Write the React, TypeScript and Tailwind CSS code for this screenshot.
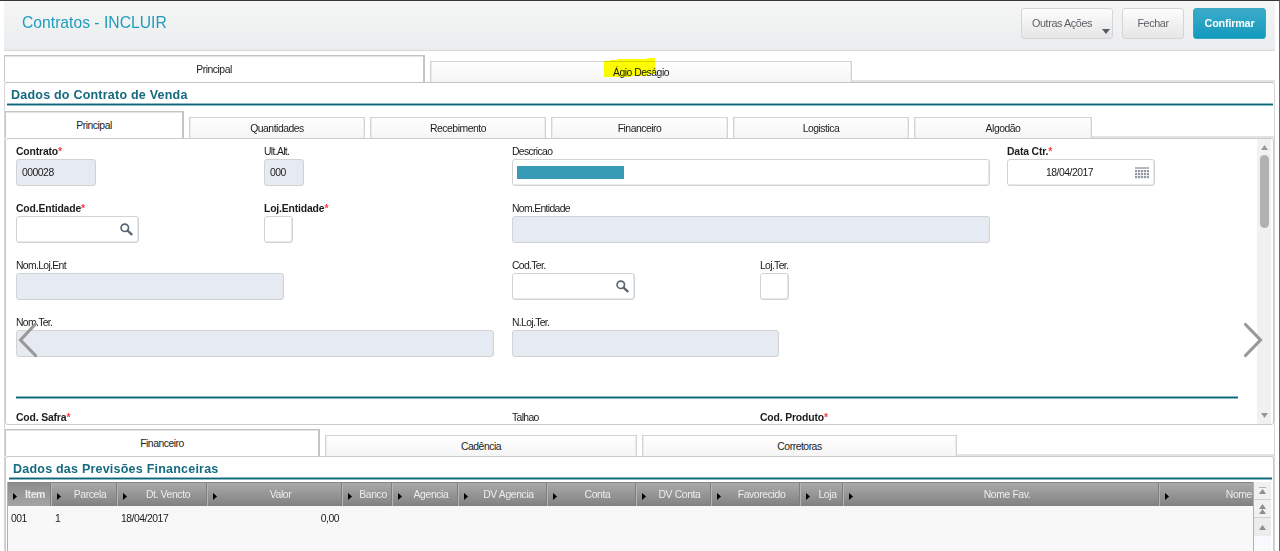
import type { ReactNode } from 'react'
import clsx from 'clsx'

interface TabItem {
  label: string
  width: string
}

const mainTabs: TabItem[] = [
  { label: 'Principal', width: 'w-[421px]' },
  { label: 'Ágio Deságio', width: 'w-[422px]' },
]

const contractTabs: TabItem[] = [
  { label: 'Principal', width: 'w-[179px]' },
  { label: 'Quantidades', width: 'w-[176px]' },
  { label: 'Recebimento', width: 'w-[176px]' },
  { label: 'Financeiro', width: 'w-[177px]' },
  { label: 'Logistica', width: 'w-[176px]' },
  { label: 'Algodão', width: 'w-[178px]' },
]

const forecastTabs: TabItem[] = [
  { label: 'Financeiro', width: 'w-[315px]' },
  { label: 'Cadência', width: 'w-[312px]' },
  { label: 'Corretoras', width: 'w-[315px]' },
]

const columns: TabItem[] = [
  { label: 'Item', width: 'w-[44px]' },
  { label: 'Parcela', width: 'w-[66px]' },
  { label: 'Dt. Vencto', width: 'w-[90px]' },
  { label: 'Valor', width: 'w-[135px]' },
  { label: 'Banco', width: 'w-[50px]' },
  { label: 'Agencia', width: 'w-[66px]' },
  { label: 'DV Agencia', width: 'w-[89px]' },
  { label: 'Conta', width: 'w-[89px]' },
  { label: 'DV Conta', width: 'w-[75px]' },
  { label: 'Favorecido', width: 'w-[89px]' },
  { label: 'Loja', width: 'w-[43px]' },
  { label: 'Nome Fav.', width: 'w-[316px]' },
]

function Tabs({ items, marked }: { items: TabItem[]; marked?: string }) {
  return (
    <div className="flex h-[27px] items-end gap-[5px]">
      {items.map((tab, i) => (
        <div
          key={tab.label}
          className={clsx(
            'relative flex shrink-0 items-center justify-center border-t border-l',
            tab.width,
            i === 0
              ? 'h-[27px] border-r-2 border-[#c4c4c4] bg-white pt-0.5 shadow-[inset_0_1px_0_#e4e4e4]'
              : 'h-[21px] border-r border-[#d3d3d3] bg-linear-to-b from-white to-[#f5f5f5] pt-px shadow-[inset_1px_0_0_#ececec,inset_-1px_0_0_#ececec]',
          )}
        >
          <span className="text-[10.4px] leading-3 tracking-[-0.48px] whitespace-nowrap">{tab.label}</span>
          {marked === tab.label && (
            <svg className="absolute -top-[4px] left-[173px] mix-blend-multiply" width="53" height="20" viewBox="0 0 53 20">
              <path d="M0 3h6V2h7V1h30V0h8v16h-7v2H27v1H0z" fill="#ffff00" />
            </svg>
          )}
        </div>
      ))}
      <div className="-ml-[5px] h-0.5 flex-1 bg-[#e3e3e3]" />
    </div>
  )
}

function Rule({ className }: { className?: string }) {
  return <div className={clsx('h-[3px] shrink-0 border-y border-[#8dbac5] bg-[#0e667b]', className)} />
}

function SectionTitle({ children }: { children: ReactNode }) {
  return <h2 className="text-[12.5px] leading-4 font-bold tracking-[0.22px] text-[#156a80]">{children}</h2>
}

interface FieldProps {
  label: string
  required?: boolean
  disabled?: boolean
  width?: string
  span?: string
  children?: ReactNode
}

function Field({ label, required, disabled, width, span, children }: FieldProps) {
  return (
    <div className={span}>
      <div
        className={clsx(
          'h-[14px] text-[10.4px] leading-[13px] whitespace-nowrap',
          required ? 'font-bold tracking-[-0.16px]' : 'tracking-[-0.66px]',
        )}
      >
        {label}
        {required && <span className="text-[#ff3b3b]">*</span>}
      </div>
      {width && (
        <div
          className={clsx(
            'flex h-[27px] items-center rounded-[3px] border border-[#d0d3d5] pl-[5px] text-[10.4px] tracking-[-0.5px] shadow-[inset_-1px_-1px_0_#e6e8e9]',
            width,
            disabled ? 'bg-[#e6eaf2]' : 'bg-white',
          )}
        >
          {children}
        </div>
      )}
    </div>
  )
}

function SearchIcon() {
  return (
    <svg className="mr-[5px] ml-auto" width="13" height="13" viewBox="0 0 13 13" fill="none" stroke="#5b6673">
      <circle cx="4.8" cy="4.8" r="3.7" strokeWidth="1.7" />
      <path d="M7.6 7.600l4 3.700" strokeWidth="2.3" strokeLinecap="round" />
    </svg>
  )
}

function CalendarIcon() {
  return (
    <svg className="mr-[5px] ml-auto" width="14" height="12" viewBox="0 0 14 12" fill="#9298a3">
      <path d="M0 0h14v2H0z" fill="#b3b8c0" />
      {[3, 6, 9].map((y) =>
        [0, 3, 6, 9, 12].map((x) => <rect key={`${x}-${y}`} x={x} y={y} width="2.2" height="2.2" />),
      )}
    </svg>
  )
}

function Triangle({ down, className }: { down?: boolean; className?: string }) {
  return (
    <svg className={className} width="7" height="5" viewBox="0 0 7 5" fill="currentColor">
      <path d={down ? 'M0 0h7L3.5 5z' : 'M0 5h7L3.5 0z'} />
    </svg>
  )
}

function ColumnArrow() {
  return (
    <svg className="mt-[3px] shrink-0" width="4" height="7" viewBox="0 0 4 7">
      <path d="M0 0v7l4-3.5z" fill="#000" />
    </svg>
  )
}

function ContractForm() {
  return (
    <div className="flex h-[287px] shrink-0 overflow-hidden rounded-[3px] border border-[#cbcbcb]">
      <div className="flex-1 pt-1.5 pl-2.5">
        <div className="grid auto-rows-[57px] grid-cols-[248px_248px_248px_247px_1fr]">
          <Field label="Contrato" required disabled width="w-[80px]">000028</Field>
          <Field label="Ult.Alt." disabled width="w-[40px]">000</Field>
          <Field label="Descricao" width="w-[478px]" span="col-span-2">
            <div className="-ml-px h-[13px] w-[107px] bg-[#379bb5]" />
          </Field>
          <Field label="Data Ctr." required width="w-[148px]">
            <span className="pl-[33px]">18/04/2017</span>
            <CalendarIcon />
          </Field>

          <Field label="Cod.Entidade" required width="w-[123px]">
            <SearchIcon />
          </Field>
          <Field label="Loj.Entidade" required width="w-[29px]" />
          <Field label="Nom.Entidade" disabled width="w-[478px]" span="col-span-3" />

          <Field label="Nom.Loj.Ent" disabled width="w-[268px]" span="col-span-2" />
          <Field label="Cod.Ter." width="w-[123px]">
            <SearchIcon />
          </Field>
          <Field label="Loj.Ter." width="w-[29px]" span="col-span-2" />

          <Field label="Nom.Ter." disabled width="w-[478px]" span="col-span-2" />
          <Field label="N.Loj.Ter." disabled width="w-[267px]" span="col-span-3" />
        </div>
        <Rule className="mt-[23px] w-[1222px]" />
        <div className="grid grid-cols-[496px_248px_1fr] pt-3">
          <Field label="Cod. Safra" required />
          <Field label="Talhao" />
          <Field label="Cod. Produto" required />
        </div>
      </div>
      <div className="mr-0.5 flex w-[14px] flex-col items-center bg-[#f1f1f1] py-1.5 text-[#9a9a9a]">
        <Triangle />
        <div className="mt-[5px] h-[73px] w-[9px] rounded-full bg-[#b1b1b1]" />
        <Triangle down className="mt-auto" />
      </div>
    </div>
  )
}

function ForecastGrid() {
  return (
    <div className="mr-0.5 ml-px flex flex-1">
      <div className="flex flex-1 flex-col overflow-hidden border-r border-l border-[#b0b0b0] bg-[#f8f8f8]">
        <div className="flex h-[24px] shrink-0 overflow-hidden border-t border-[#868686] bg-linear-to-b from-[#aaaaaa] to-[#818181] text-[10.4px] tracking-[-0.38px] text-[#ececec]">
          {columns.map((col, i) => (
            <div
              key={col.label}
              className={clsx(
                'flex shrink-0 items-center border-r border-[#b5b5b5] pl-[5px] shadow-[inset_-1px_0_0_#7d7d7d]',
                col.width,
                i === 0 && 'bg-linear-to-b from-[#8d8d8d] to-[#a5a5a5] font-bold',
              )}
            >
              <ColumnArrow />
              <span className="flex-1 pl-0.5 text-center whitespace-nowrap">{col.label}</span>
            </div>
          ))}
          <div className="flex w-[94px] shrink-0 items-center pl-[5px]">
            <ColumnArrow />
            <span className="ml-auto pr-0.5">Nome</span>
          </div>
        </div>
        <div className="flex pt-[7px] text-[10.4px] leading-3 tracking-[-0.48px]">
          <span className="w-[44px] pl-[3px]">001</span>
          <span className="w-[66px] pl-[3px]">1</span>
          <span className="w-[90px] pl-[3px]">18/04/2017</span>
          <span className="w-[135px] pr-1 text-right">0,00</span>
        </div>
      </div>
      <div className="flex w-[17px] flex-col bg-[#f8f9fc] text-[#8f8f8f]">
        <button type="button" aria-label="Primeiro" className="flex h-[18px] flex-col items-center justify-center gap-px border-b border-[#cfcfcf] bg-[#f0f1f2]">
          <span className="h-px w-[7px] bg-[#b5b5b5]" />
          <Triangle />
        </button>
        <button type="button" aria-label="Página anterior" className="flex h-[18px] flex-col items-center justify-center border-b border-[#cfcfcf] bg-[#f0f1f2]">
          <Triangle />
          <Triangle />
        </button>
        <button type="button" aria-label="Anterior" className="flex h-[18px] flex-col items-center justify-center bg-[#ececee]">
          <Triangle />
        </button>
      </div>
    </div>
  )
}

export default function App() {
  return (
    <div className="relative flex h-[551px] w-[1280px] flex-col overflow-hidden border-t border-r border-t-[#38383a] border-r-[#2a7f95] bg-white pr-1 pl-1 font-['Liberation_Sans',Arial,sans-serif] text-[#1c1c1c]">
      <header className="flex h-[50px] shrink-0 items-start border-b border-[#d8d9da] bg-linear-to-b from-[#f5f6f5] to-[#ebecee] pr-[9px] pl-[18px]">
        <h1 className="pt-[11px] text-[15.7px] leading-[22px] text-[#1d9dbd]">Contratos - INCLUIR</h1>
        <div className="ml-auto flex gap-[9px] pt-[7px] text-[10.8px] tracking-[-0.4px] text-[#5c5f66]">
          <button
            type="button"
            className="relative h-[31px] w-[92px] rounded-[3px] border border-[#d4d5d6] bg-linear-to-b from-[#fdfdfd] to-[#e6e6e6] pr-2.5 whitespace-nowrap"
          >
            Outras Ações
            <svg className="absolute right-0.5 bottom-1" width="8" height="5" viewBox="0 0 8 5">
              <path d="M0 0h8L4 5z" fill="#555962" />
            </svg>
          </button>
          <button type="button" className="h-[31px] w-[62px] rounded-[3px] border border-[#d4d5d6] bg-linear-to-b from-[#fdfdfd] to-[#e6e6e6]">
            Fechar
          </button>
          <button type="button" className="h-[31px] w-[73px] rounded-[3px] border border-[#3fa6c1] bg-linear-to-b from-[#3aabc9] to-[#0e9abd] font-bold tracking-[-0.2px] text-white">
            Confirmar
          </button>
        </div>
      </header>

      <div className="shrink-0 pt-1">
        <Tabs items={mainTabs} marked="Ágio Deságio" />
      </div>

      <main className="flex min-h-0 flex-1 flex-col rounded-t-[3px] border-x border-t border-x-[#d6d6d6] border-t-[#c4c4c4]">
        <div className="px-1.5 pt-1">
          <SectionTitle>Dados do Contrato de Venda</SectionTitle>
        </div>
        <Rule className="mr-px ml-0.5" />
        <div className="shrink-0 pt-[5px]">
          <Tabs items={contractTabs} />
        </div>
        <ContractForm />
        <div className="shrink-0 pt-1">
          <Tabs items={forecastTabs} />
        </div>
        <section className="flex min-h-0 flex-1 flex-col rounded-t-[3px] border-x border-t border-[#cbcbcb]">
          <div className="px-[7px] pt-1">
            <SectionTitle>Dados das Previsões Financeiras</SectionTitle>
          </div>
          <Rule className="mr-px mb-0.5 ml-[3px]" />
          <ForecastGrid />
        </section>
      </main>

      {/* floating page arrows */}
      <svg className="absolute top-[321px] left-[18px]" width="20" height="36" viewBox="0 0 20 36" fill="none" stroke="#999999" strokeWidth="3.2">
        <path d="M17.500 2L2.500 18l15 15.500" strokeLinecap="round" />
      </svg>
      <svg className="absolute top-[321px] left-[1243px]" width="20" height="36" viewBox="0 0 20 36" fill="none" stroke="#999999" strokeWidth="3.2">
        <path d="M2.500 2.500L17.500 18l-15 15.500" strokeLinecap="round" />
      </svg>
    </div>
  )
}
